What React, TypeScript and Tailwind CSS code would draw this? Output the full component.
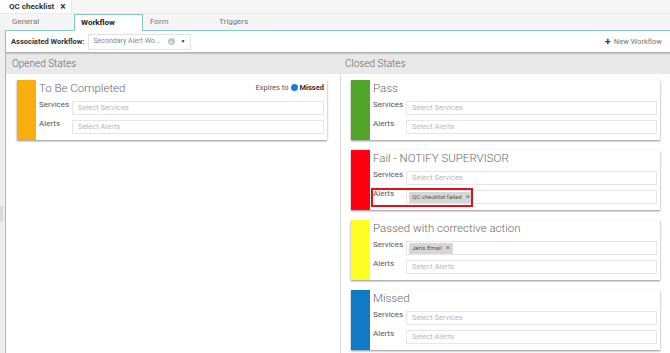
import React from 'react';

type Chip = string;

interface StateDef {
  title: string;
  bar: string;
  services?: Chip[];
  alerts?: Chip[];
  highlightAlerts?: boolean;
}

const closedStates: StateDef[] = [
  { title: 'Pass', bar: 'bg-[#52a42b]' },
  { title: 'Fail - NOTIFY SUPERVISOR', bar: 'bg-[#fe0012]', alerts: ['QC checklist failed'], highlightAlerts: true },
  { title: 'Passed with corrective action', bar: 'bg-[#ffff24]', services: ["Jen's Email"] },
  { title: 'Missed', bar: 'bg-[#1179c6]' },
];

const TagChip = ({ text }: { text: string }) => (
  <span className="flex items-center whitespace-nowrap h-[11px] bg-[#d6d6d6] rounded-[1px] pl-[3px] pr-[3px] text-[6px] text-[#555] leading-none">
    {text}
    <span className="ml-[4px] text-[8px] text-[#777]">×</span>
  </span>
);

const FieldRow = ({
  label,
  placeholder,
  chips,
  highlight,
  className = '',
}: {
  label: string;
  placeholder: string;
  chips?: Chip[];
  highlight?: boolean;
  className?: string;
}) => (
  <div className={`relative flex items-start ${className}`}>
    <span className="w-[33px] shrink-0 text-[8px] leading-[10px] text-[#555] -mt-[1px]">{label}</span>
    <div className="flex-1 h-[14px] border border-[#e6e6e6] bg-white flex items-center px-[4px] text-[7.5px] text-[#b8b8b8]">
      {chips && chips.length > 0 ? (
        <div className="flex gap-1 -ml-[2px]">
          {chips.map((c) => (
            <TagChip key={c} text={c} />
          ))}
        </div>
      ) : (
        <span className="pl-[1px]">{placeholder}</span>
      )}
    </div>
    {highlight && (
      <div className="absolute -left-[2px] -top-[2px] w-[102px] h-[19px] border-2 border-[#e3101a] pointer-events-none" />
    )}
  </div>
);

const StateCard = ({ state, expires }: { state: StateDef; expires?: boolean }) => (
  <div className="flex h-[60px] bg-white shadow-[0_1px_2px_rgba(0,0,0,0.45)]">
    <div className={`w-[19px] shrink-0 ${state.bar}`} />
    <div className="flex-1 flex flex-col pl-[3px] pr-[3px]">
      <div className="h-[18px] flex items-center justify-between">
        <span className="text-[11.5px] font-light text-[#6a6a6a] leading-none">{state.title}</span>
        {expires && (
          <span className="flex items-center text-[7.5px] text-[#555] -mt-[3px]">
            Expires to
            <span className="inline-block w-[7px] h-[7px] rounded-full bg-[#1a7fd2] ml-[3px] mr-[1px]" />
            <span className="font-bold text-[#333]">Missed</span>
          </span>
        )}
      </div>
      <FieldRow className="mt-[3px]" label="Services" placeholder="Select Services" chips={state.services} />
      <FieldRow
        className="mt-[5px]"
        label="Alerts"
        placeholder="Select Alerts"
        chips={state.alerts}
        highlight={state.highlightAlerts}
      />
    </div>
  </div>
);

export default function App() {
  const tabs = ['General', 'Workflow', 'Form', 'Triggers'];

  return (
    <div className="w-[670px] h-[353px] overflow-hidden bg-white font-[Roboto,'Liberation_Sans',sans-serif] flex flex-col">
      {/* document tab */}
      <div className="h-[14px] flex bg-[#f6f6f6] border-b border-[#ebebeb] shrink-0">
        <div className="w-[72px] bg-white border-r border-[#e6e6e6] flex items-center pl-[9px] text-[8px] font-bold text-[#333]">
          QC checklist
          <span className="ml-[6px] text-[10px] leading-none">×</span>
        </div>
      </div>

      {/* section tabs */}
      <div className="h-[16px] flex bg-[#f5f5f5] pl-[5px] shrink-0 relative z-10">
        {tabs.map((t) => (
          <div
            key={t}
            className={
              t === 'Workflow'
                ? 'w-[69px] -mb-px bg-white border border-b-0 border-[#86c6c6] flex items-center pl-[6px] text-[8px] font-bold text-[#222]'
                : 'w-[69px] flex items-center pl-[7px] text-[8px] text-[#777]'
            }
          >
            {t}
          </div>
        ))}
      </div>

      <div className="flex flex-1 min-h-0">
        {/* left gutter */}
        <div className="w-[5px] shrink-0 bg-[#efefef] flex flex-col">
          <div className="h-[176px]" />
          <div className="h-[16px] w-[3px] bg-[#dcdcdc]" />
        </div>

        <div className="flex-1 flex flex-col border-l border-t border-[#86c6c6] min-w-0">
          {/* toolbar */}
          <div className="h-[22px] flex items-center justify-between pl-[5px] pr-[8px] border-b border-[#b3b3b3] shadow-[0_1px_1px_rgba(0,0,0,0.15)] shrink-0 relative z-[1]">
            <div className="flex items-center">
              <span className="text-[7.5px] font-bold text-[#333] whitespace-nowrap">Associated Workflow:</span>
              <div className="ml-[4px] w-[103px] h-[16px] border border-[#e2e2e2] flex items-center pl-[4px] text-[7px] text-[#888] whitespace-nowrap">
                <span className="flex-1">Secondary Alert Wo...</span>
                <span className="ml-[3px] shrink-0 w-[7px] h-[7px] rounded-full bg-[#c4c4c4] flex items-center justify-center text-white text-[6px] leading-none">×</span>
                <span className="shrink-0 ml-[6px] mr-[5px] text-[5px] text-[#333]">▼</span>
              </div>
            </div>
            <div className="flex items-center text-[7.5px] text-[#777]">
              <span className="text-[11px] font-bold text-[#444] leading-none mr-[3px]">+</span>
              New Workflow
            </div>
          </div>

          <div className="flex flex-1 min-h-0">
            {/* opened */}
            <div className="w-[335px] shrink-0 flex flex-col">
              <div className="h-[21px] bg-[#e9e9e9] flex items-center pl-[6px] text-[10px] font-light text-[#666] shrink-0">
                Opened States
              </div>
              <div className="flex-1 border-r border-[#d8d8d8] pt-[6px] pl-[11px] pr-[13px]">
                <StateCard
                  state={{ title: 'To Be Completed', bar: 'bg-[#f8ae0c]' }}
                  expires
                />
              </div>
            </div>

            {/* closed */}
            <div className="flex-1 flex flex-col min-w-0">
              <div className="h-[21px] bg-[#e9e9e9] flex items-center pl-[4px] text-[10px] font-light text-[#666] shrink-0">
                Closed States
              </div>
              <div className="flex-1 pt-[6px] pl-[10px] pr-[10px] flex flex-col gap-[10px]">
                {closedStates.map((s) => (
                  <StateCard key={s.title} state={s} />
                ))}
              </div>
            </div>
          </div>
        </div>
      </div>
    </div>
  );
}
